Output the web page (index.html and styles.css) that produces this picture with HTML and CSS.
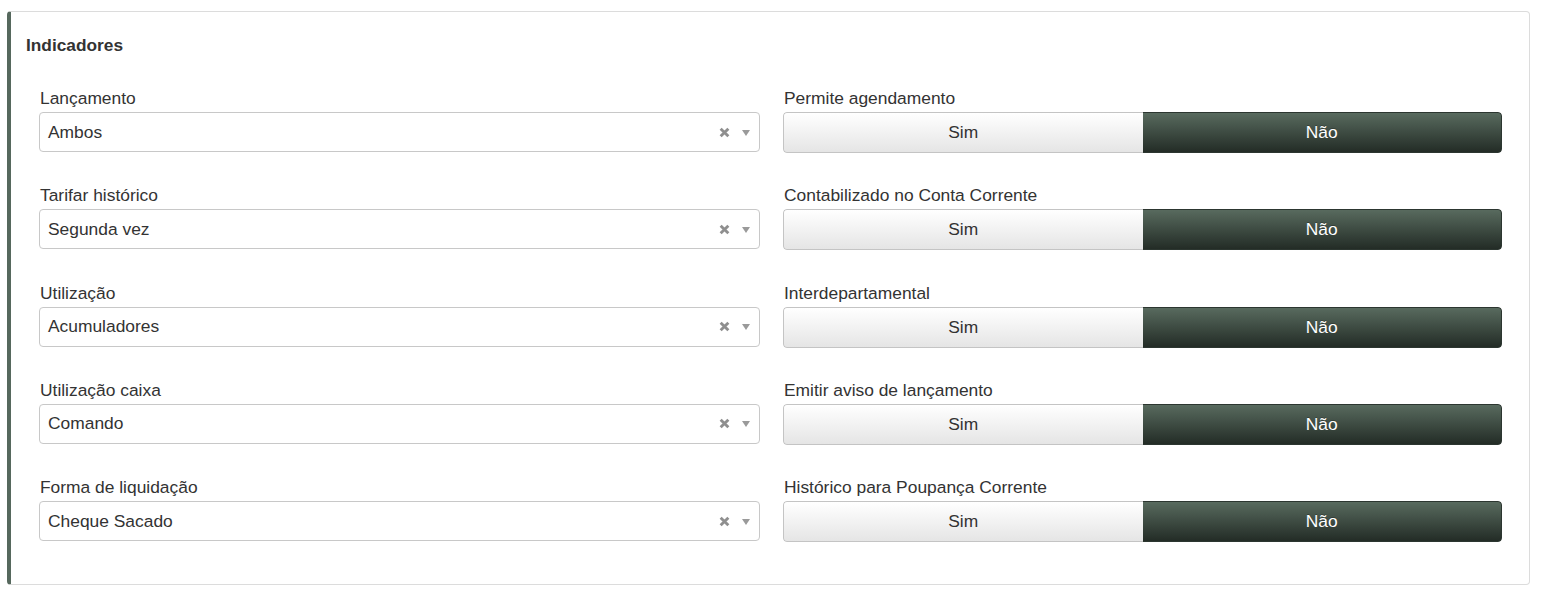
FILE: index.html
```html
<!DOCTYPE html>
<html lang="pt">
<head>
<meta charset="utf-8">
<title>Indicadores</title>
<link rel="stylesheet" href="styles.css">
</head>
<body>
<section class="panel">
  <h2 class="panel-title">Indicadores</h2>
  <div class="grid">
    <div class="field">
      <label class="label">Lançamento</label>
      <div class="select"><span class="value">Ambos</span><span class="icons"><svg class="clear" viewBox="0 0 10 10"><path d="M1.5 1.5 L8.5 8.5 M8.5 1.5 L1.5 8.5"/></svg><span class="arrow"></span></span></div>
    </div>
    <div class="field">
      <label class="label">Permite agendamento</label>
      <div class="toggle"><span class="opt">Sim</span><span class="opt active">Não</span></div>
    </div>

    <div class="field">
      <label class="label">Tarifar histórico</label>
      <div class="select"><span class="value">Segunda vez</span><span class="icons"><svg class="clear" viewBox="0 0 10 10"><path d="M1.5 1.5 L8.5 8.5 M8.5 1.5 L1.5 8.5"/></svg><span class="arrow"></span></span></div>
    </div>
    <div class="field">
      <label class="label">Contabilizado no Conta Corrente</label>
      <div class="toggle"><span class="opt">Sim</span><span class="opt active">Não</span></div>
    </div>

    <div class="field">
      <label class="label">Utilização</label>
      <div class="select"><span class="value">Acumuladores</span><span class="icons"><svg class="clear" viewBox="0 0 10 10"><path d="M1.5 1.5 L8.5 8.5 M8.5 1.5 L1.5 8.5"/></svg><span class="arrow"></span></span></div>
    </div>
    <div class="field">
      <label class="label">Interdepartamental</label>
      <div class="toggle"><span class="opt">Sim</span><span class="opt active">Não</span></div>
    </div>

    <div class="field">
      <label class="label">Utilização caixa</label>
      <div class="select"><span class="value">Comando</span><span class="icons"><svg class="clear" viewBox="0 0 10 10"><path d="M1.5 1.5 L8.5 8.5 M8.5 1.5 L1.5 8.5"/></svg><span class="arrow"></span></span></div>
    </div>
    <div class="field">
      <label class="label">Emitir aviso de lançamento</label>
      <div class="toggle"><span class="opt">Sim</span><span class="opt active">Não</span></div>
    </div>

    <div class="field">
      <label class="label">Forma de liquidação</label>
      <div class="select"><span class="value">Cheque Sacado</span><span class="icons"><svg class="clear" viewBox="0 0 10 10"><path d="M1.5 1.5 L8.5 8.5 M8.5 1.5 L1.5 8.5"/></svg><span class="arrow"></span></span></div>
    </div>
    <div class="field">
      <label class="label">Histórico para Poupança Corrente</label>
      <div class="toggle"><span class="opt">Sim</span><span class="opt active">Não</span></div>
    </div>
  </div>
</section>
</body>
</html>
```

FILE: styles.css
```css
* { box-sizing: border-box; }
html, body { margin: 0; padding: 0; background: #fff; }
body {
  font-family: "Liberation Sans", Arial, sans-serif;
  color: #333;
  padding: 11px 16px 0 7px;
}
.panel {
  width: 1523px;
  height: 574px;
  border: 1px solid #dcdcdc;
  border-left: 4px solid #56685d;
  border-radius: 4px;
  padding: 23px 27px 0 14px;
}
.panel-title {
  margin: 0 0 0 1px;
  font-size: 17.3px;
  font-weight: bold;
  line-height: 20px;
  color: #333;
}
.grid {
  display: grid;
  grid-template-columns: 721px 719px;
  column-gap: 23px;
  row-gap: 32.3px;
  margin-top: 33px;
  margin-left: 14px;
}
.field { display: flex; flex-direction: column; }
.label {
  font-size: 17.4px;
  line-height: 20px;
  margin-bottom: 4px;
  padding-left: 1px;
  color: #333;
}
.select {
  height: 40px;
  border: 1px solid #c8c8c8;
  border-radius: 4px;
  display: flex;
  align-items: center;
  justify-content: space-between;
  padding: 0 9px 0 8px;
  background: #fff;
}
.value { font-size: 17.4px; color: #333; }
.icons { display: flex; align-items: center; gap: 12px; }
.clear {
  width: 11px; height: 11px;
  stroke: #8f8f8f; stroke-width: 2.6; fill: none;
}
.arrow {
  width: 0; height: 0;
  border-left: 4px solid transparent;
  border-right: 4px solid transparent;
  border-top: 6px solid #9a9a9a;
  margin-top: 1px;
}
.toggle {
  height: 41px;
  display: grid;
  grid-template-columns: 1fr 1fr;
  border-radius: 4px;
  overflow: hidden;
}
.opt {
  display: flex;
  align-items: center;
  justify-content: center;
  font-size: 17.4px;
  color: #333;
  background: linear-gradient(#ffffff, #e5e5e5);
  border: 1px solid #c4c4c4;
  border-right: 0;
  border-radius: 4px 0 0 4px;
}
.opt.active {
  color: #fff;
  background: linear-gradient(#586a5e, #232c26);
  border: 1px solid #2c3630;
  border-left: 0;
  border-radius: 0 4px 4px 0;
  text-shadow: 0 -1px 0 rgba(0,0,0,0.25);
}
```
